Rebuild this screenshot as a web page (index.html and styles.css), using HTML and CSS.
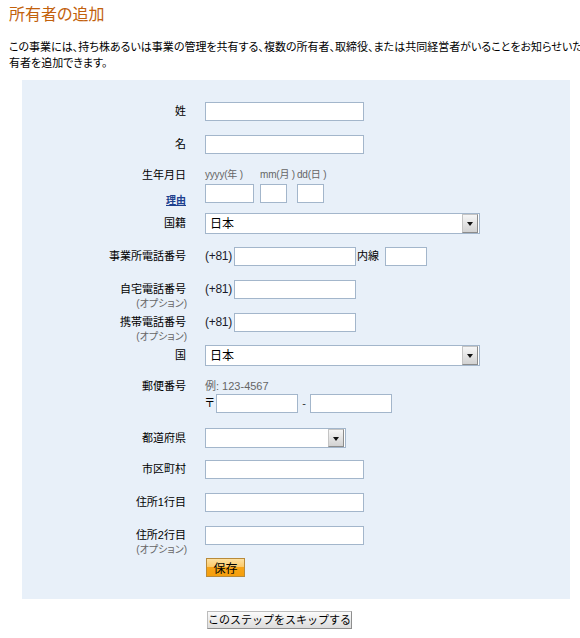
FILE: index.html
```html
<!DOCTYPE html>
<html lang="ja">
<head>
  <meta charset="UTF-8">
  <title>所有者の追加</title>
  <link rel="stylesheet" href="styles.css">
</head>
<body>

  <h1 class="page-title">所有者の追加</h1>
  <p class="intro">この事業には、持ち株あるいは事業の管理を共有する、複数の所有者、取締役、または共同経営者がいることをお知らせいただいた所<br>有者を追加できます。</p>

  <form class="panel" id="ownerForm">
    <div class="row">
      <div class="label">姓</div>
      <div class="field"><input type="text" class="text"></div>
    </div>

    <div class="row">
      <div class="label">名</div>
      <div class="field"><input type="text" class="text"></div>
    </div>

    <!-- 生年月日 -->
    <div class="row row-birth">
      <div class="label label-birth">
        生年月日
        <a href="#" class="why">理由</a>
      </div>
      <div class="field dates">
        <div class="date-part part-yy">
          <span class="hint hint-date">yyyy(年 )</span>
          <input type="text" class="text w-year">
        </div>
        <div class="date-part part-mm">
          <span class="hint hint-date">mm(月 )</span>
          <input type="text" class="text w-small">
        </div>
        <div class="date-part part-dd">
          <span class="hint hint-date">dd(日 )</span>
          <input type="text" class="text w-small">
        </div>
      </div>
    </div>

    <div class="row row-select">
      <div class="label label-select">国籍</div>
      <div class="field">
        <div class="select wide">
          <select><option>日本</option></select>
          <span class="select-btn"><span class="tri"></span></span>
        </div>
      </div>
    </div>

    <div class="row">
      <div class="label">事業所電話番号</div>
      <div class="field inline">
        <span class="prefix">(+81)</span>
        <input type="text" class="text w-phone">
        <span class="ext">内線</span>
        <input type="text" class="text w-ext">
      </div>
    </div>

    <div class="row">
      <div class="label label-opt">
        自宅電話番号
        <span class="opt">(オプション)</span>
      </div>
      <div class="field inline">
        <span class="prefix">(+81)</span>
        <input type="text" class="text w-phone">
      </div>
    </div>

    <div class="row row-short">
      <div class="label label-opt">
        携帯電話番号
        <span class="opt">(オプション)</span>
      </div>
      <div class="field inline">
        <span class="prefix">(+81)</span>
        <input type="text" class="text w-phone">
      </div>
    </div>

    <div class="row row-country">
      <div class="label label-select">国</div>
      <div class="field">
        <div class="select wide">
          <select><option>日本</option></select>
          <span class="select-btn"><span class="tri"></span></span>
        </div>
      </div>
    </div>

    <!-- 郵便番号 -->
    <div class="row row-postal">
      <div class="label label-postal">郵便番号</div>
      <div class="field">
        <div class="hint hint-postal">例: 123-4567</div>
        <div class="inline">
          <span class="mark">〒</span>
          <input type="text" class="text w-postal">
          <span class="dash">-</span>
          <input type="text" class="text w-postal">
        </div>
      </div>
    </div>

    <div class="row row-short">
      <div class="label label-pref">都道府県</div>
      <div class="field">
        <div class="select narrow">
          <select><option></option></select>
          <span class="select-btn"><span class="tri"></span></span>
        </div>
      </div>
    </div>

    <div class="row">
      <div class="label">市区町村</div>
      <div class="field"><input type="text" class="text"></div>
    </div>

    <div class="row">
      <div class="label">住所1行目</div>
      <div class="field"><input type="text" class="text"></div>
    </div>

    <div class="row row-short">
      <div class="label label-opt">
        住所2行目
        <span class="opt">(オプション)</span>
      </div>
      <div class="field"><input type="text" class="text"></div>
    </div>

    <div class="row row-save">
      <div class="label"></div>
      <div class="field"><button type="submit" class="btn-save">保存</button></div>
    </div>
  </form>

  <div class="skip">
    <button type="button" class="btn-skip">このステップをスキップする</button>
  </div>

</body>
</html>
```

FILE: styles.css
```css
body {
  margin: 0;
  padding: 0;
  background: #fff;
  color: #000;
  font-family: "Liberation Sans", "Noto Sans CJK JP", sans-serif;
  font-size: 11px;
  font-feature-settings: "palt";
  overflow: hidden;
}
.page-title {
  margin: 5px 0 0 9px;
  font-size: 16px;
  line-height: 20px;
  font-weight: normal;
  color: #c2610c;
}
.intro {
  margin: 14px 0 0 9px;
  width: 700px;
  line-height: 16px;
  white-space: nowrap;
}

.panel {
  margin: 9px 0 0 22px;
  width: 548px;
  padding: 22px 0 22px 0;
  background: #e8f0f9;
}
.row {
  display: grid;
  grid-template-columns: 164px auto;
  column-gap: 19px;
  align-items: start;
  height: 33px;
}
.row-short { height: 32px; }
.row-birth { height: 45px; }
.row-select { height: 34px; }
.row-country { height: 34px; }
.row-postal { height: 49px; }
.row-save { height: 19px; }

.label {
  text-align: right;
  line-height: 19px;
}
.label-birth { line-height: 14px; }
.label-select { line-height: 21px; }
.label-postal { line-height: 15px; }
.label-pref { line-height: 20px; }
.label-opt { line-height: 18px; }
.opt {
  display: block;
  line-height: 12px;
  font-size: 10px;
  color: #666;
  margin-right: -1px;
}
.why {
  display: block;
  margin-top: 12px;
  line-height: 14px;
  font-size: 10px;
  font-weight: bold;
  color: #1d3f8e;
}

input.text {
  box-sizing: border-box;
  display: block;
  width: 159px;
  height: 19px;
  margin: 0;
  padding: 1px 3px;
  border: 1px solid #a3b6cb;
  background: #fff;
  font-family: inherit;
  font-size: 12px;
  outline: none;
}
input.w-year { width: 49px; }
input.w-small { width: 27px; }
input.w-phone { width: 122px; }
input.w-ext { width: 42px; }
input.w-postal { width: 82px; }

.hint {
  color: #666;
  line-height: 14px;
  white-space: nowrap;
}
.hint-date {
  font-size: 10px;
  letter-spacing: -0.2px;
}
.hint-postal { line-height: 15px; }
.dates {
  display: flex;
}
.date-part {
  display: flex;
  flex-direction: column;
  gap: 2px;
  flex: none;
}
.part-yy { width: 49px; }
.part-mm { width: 27px; margin-left: 6px; }
.part-dd { width: 27px; margin-left: 10px; }

.inline {
  display: flex;
  align-items: center;
}
.prefix {
  width: 29px;
  line-height: 19px;
  font-size: 12px;
  letter-spacing: -0.3px;
  color: #1a1a2a;
}
.ext {
  width: 28px;
  padding-left: 1px;
  line-height: 19px;
}
.mark {
  width: 11px;
  line-height: 19px;
  font-size: 11px;
  overflow: hidden;
}
.dash {
  width: 12px;
  text-align: center;
  line-height: 19px;
  color: #333;
}

.select {
  box-sizing: border-box;
  display: flex;
  height: 21px;
  border: 1px solid #a3b6cb;
  background: #fff;
}
.select.wide { width: 275px; }
.select.narrow { width: 141px; height: 20px; }
.select select {
  flex: 1;
  min-width: 0;
  appearance: none;
  -webkit-appearance: none;
  border: none;
  background: transparent;
  padding: 0 0 0 4px;
  font-family: inherit;
  font-size: 12px;
  color: #000;
  outline: none;
}
.select-btn {
  box-sizing: border-box;
  width: 16px;
  margin: 0 1px 0 0;
  display: flex;
  align-items: center;
  justify-content: center;
  border: 1px solid #8c8c8c;
  border-top-color: #c4c4c4;
  border-left-color: #c4c4c4;
  background: linear-gradient(#f6f6f6, #d2d2d2);
}
.tri {
  width: 0;
  height: 0;
  border-left: 3.5px solid transparent;
  border-right: 3.5px solid transparent;
  border-top: 4px solid #111;
  margin-top: 1px;
}

.btn-save {
  box-sizing: border-box;
  width: 39px;
  height: 19px;
  margin-left: 1px;
  padding: 0;
  border: 1px solid #b88a3a;
  background: linear-gradient(#fde0a0 0, #fbc866 50%, #f7a418 50%, #f59f0c 100%);
  font-family: inherit;
  font-size: 12px;
  color: #000;
  cursor: pointer;
}

.skip {
  margin-top: 12px;
  padding-left: 207px;
}
.btn-skip {
  box-sizing: border-box;
  width: 145px;
  height: 18px;
  padding: 0;
  border: 1px solid #8e8e8e;
  border-top-color: #bcbcbc;
  border-left-color: #bcbcbc;
  background: linear-gradient(#fbfbfb, #dcdcdc);
  font-family: inherit;
  font-size: 11px;
  line-height: 16px;
  white-space: nowrap;
  color: #000;
  cursor: pointer;
}
```
